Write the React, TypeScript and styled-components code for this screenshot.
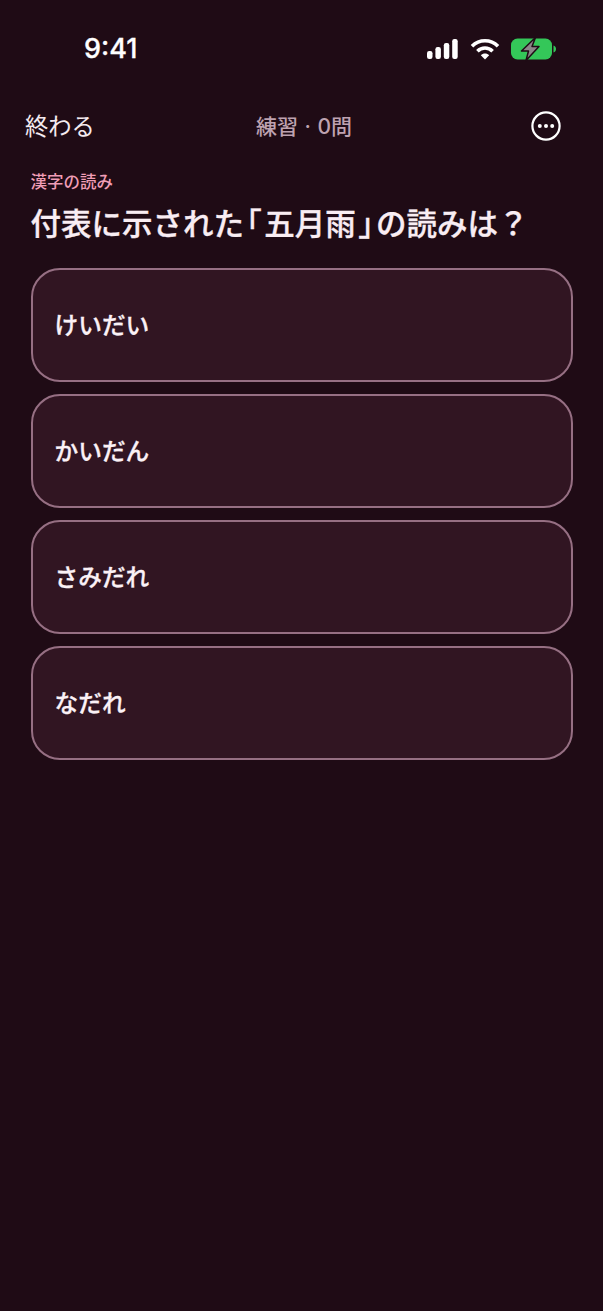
import React from 'react'
import styled, { createGlobalStyle } from 'styled-components'

const choices = ['けいだい', 'かいだん', 'さみだれ', 'なだれ']

const GlobalStyle = createGlobalStyle`
  html, body {
    margin: 0;
    background: #1f0b15;
  }
  body {
    font-family: Inter, "Noto Sans CJK JP", sans-serif;
  }
`

const SignalIcon = () => (
  <svg width="31" height="20" viewBox="0 0 31 20" fill="#fff">
    <rect x="0" y="12" width="5.500" height="8" rx="2.200" />
    <rect x="8.400" y="8" width="5.500" height="12" rx="2.200" />
    <rect x="16.800" y="4" width="5.500" height="16" rx="2.200" />
    <rect x="25.200" y="0" width="5.500" height="20" rx="2.200" />
  </svg>
)

const WifiIcon = () => (
  <svg width="30" height="22" viewBox="0 0 30 22" fill="none" stroke="#fff" strokeWidth="3.600">
    <path d="M2 8.200C9.400 .9 20.600 .9 28 8.200" />
    <path d="M7.400 13.200C11.700 9 18.300 9 22.600 13.200" />
    <path d="M15 21.500l-4.200-4.300c2.300-2.200 6.100-2.200 8.400 0z" fill="#fff" stroke="none" />
  </svg>
)

const BatteryIcon = () => (
  <BatterySvg width="45" height="24" viewBox="0 0 45 24">
    <rect x="0" y="1.500" width="41" height="21" rx="6.500" fill="#34c759" />
    <path d="M42.500 8.500c1.500.4 2.500 1.800 2.500 3.500s-1 3.100-2.500 3.500z" fill="#34c759" />
    <path
      d="M24.500 .5L10.500 14H17.500L15 23.500L28 9.500H21z"
      fill="#8d8589"
      stroke="#1f0b15"
      strokeWidth="1.500"
      strokeLinejoin="round"
    />
  </BatterySvg>
)

const MoreIcon = () => (
  <svg width="30" height="30" viewBox="0 0 30 30" fill="none">
    <circle cx="15" cy="15" r="13.600" stroke="#fff" strokeWidth="2.200" />
    <circle cx="8.800" cy="15" r="2" fill="#fff" />
    <circle cx="15" cy="15" r="2" fill="#fff" />
    <circle cx="21.200" cy="15" r="2" fill="#fff" />
  </svg>
)

export default function App() {
  return (
    <Screen>
      <GlobalStyle />
      <StatusBar>
        <Clock>9:41</Clock>
        <StatusIcons>
          <SignalIcon />
          <WifiIcon />
          <BatteryIcon />
        </StatusIcons>
      </StatusBar>
      <NavBar>
        <QuitLabel>終わる</QuitLabel>
        <NavTitle>練習 · 0問</NavTitle>
        <MoreIcon />
      </NavBar>
      <Content>
        <Category>漢字の読み</Category>
        <Question>
          付表に示された<Bracket>「</Bracket>五月雨<Bracket>」</Bracket>の読みは？
        </Question>
        <ChoiceList>
          {choices.map((choice) => (
            <Choice key={choice}>{choice}</Choice>
          ))}
        </ChoiceList>
      </Content>
    </Screen>
  )
}

const Screen = styled.div`
  background: #1f0b15;
  color: #fff;
  height: 1311px;
  overflow: hidden;
  width: 603px;
`

const StatusBar = styled.div`
  align-items: center;
  display: flex;
  height: 22px;
  justify-content: space-between;
  padding: 38px 47px 0 84px;
`

const Clock = styled.div`
  -webkit-text-stroke: 0.3px #fff;
  font-size: 27px;
  font-weight: 500;
  line-height: 22px;
`

const StatusIcons = styled.div`
  align-items: center;
  display: flex;
  gap: 11.5px;
`

const BatterySvg = styled.svg`
  overflow: visible;
`

const NavBar = styled.div`
  align-items: center;
  display: flex;
  height: 30px;
  justify-content: space-between;
  margin-top: 51px;
  padding: 0 42px 0 25px;
  position: relative;
`

const QuitLabel = styled.div`
  color: #f4eaef;
  font-size: 23.3px;
  font-weight: 400;
  margin-top: -2px;
`

const NavTitle = styled.div`
  color: #bea2b0;
  font-size: 21px;
  font-weight: 500;
  left: 304px;
  margin-top: -2px;
  position: absolute;
  transform: translateX(-50%);
  white-space: pre;
  word-spacing: 1px;
`

const Content = styled.div`
  padding: 30px 30.5px 0;
`

const Category = styled.div`
  color: #f09db5;
  font-size: 16.5px;
  font-weight: 500;
  line-height: 22px;
`

const Question = styled.div`
  -webkit-text-stroke: 0.35px #f9edf3;
  color: #f9edf3;
  font-size: 30.5px;
  font-weight: 500;
  line-height: 42px;
  margin-top: 10px;
  white-space: nowrap;
`

const Bracket = styled.span`
  font-feature-settings: 'halt';
  padding: 0 2.5px;
`

const ChoiceList = styled.div`
  display: flex;
  flex-direction: column;
  gap: 12px;
  margin-top: 23px;
`

const Choice = styled.div`
  -webkit-text-stroke: 0.3px #fbf1f6;
  align-items: center;
  background: #311522;
  border: 2px solid #966f83;
  border-radius: 29px;
  box-sizing: border-box;
  color: #fbf1f6;
  display: flex;
  font-size: 23.7px;
  font-weight: 500;
  height: 114px;
  padding: 0 22px 2px;
  width: 542px;
`
